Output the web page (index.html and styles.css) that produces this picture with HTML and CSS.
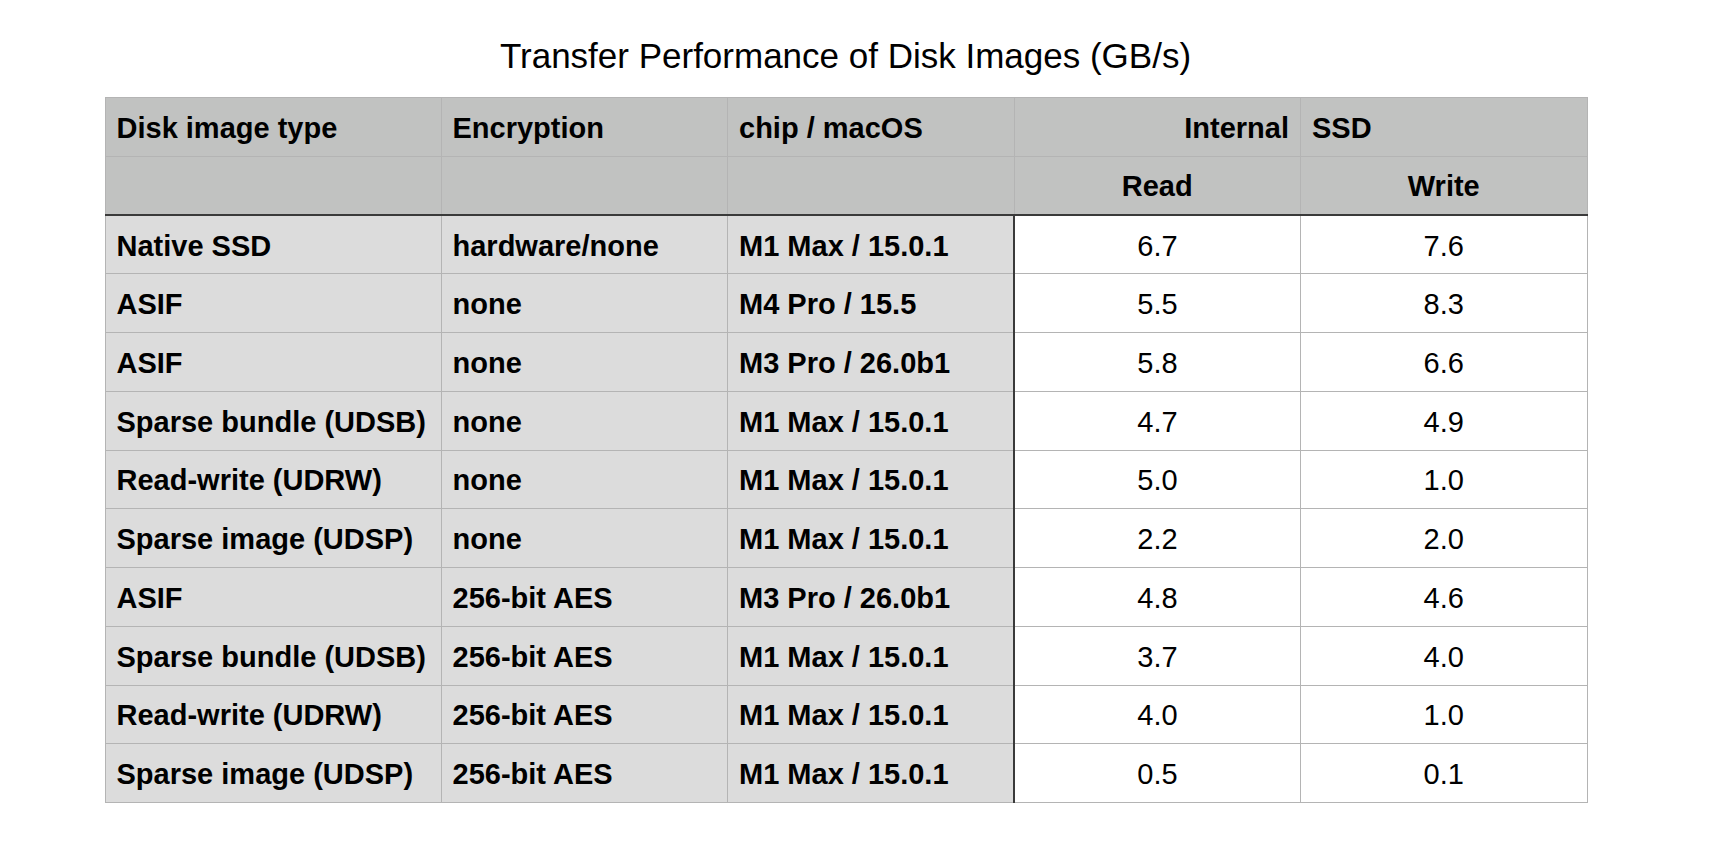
FILE: index.html
```html
<!DOCTYPE html>
<html lang="en">
<head>
<meta charset="utf-8">
<title>Transfer Performance of Disk Images (GB/s)</title>
<link rel="stylesheet" href="styles.css">
</head>
<body>
<div class="sheet">
  <h1 class="title">Transfer Performance of Disk Images (GB/s)</h1>
  <table class="perf">
    <colgroup>
      <col class="c-type"><col class="c-enc"><col class="c-chip"><col class="c-read"><col class="c-write">
    </colgroup>
    <thead>
      <tr class="h1">
        <th>Disk image type</th>
        <th>Encryption</th>
        <th>chip / macOS</th>
        <th class="right">Internal</th>
        <th>SSD</th>
      </tr>
      <tr class="h2">
        <th></th>
        <th></th>
        <th></th>
        <th class="center">Read</th>
        <th class="center">Write</th>
      </tr>
    </thead>
    <tbody>
      <tr><td class="lab">Native SSD</td><td class="lab">hardware/none</td><td class="lab last">M1 Max / 15.0.1</td><td class="num">6.7</td><td class="num">7.6</td></tr>
      <tr><td class="lab">ASIF</td><td class="lab">none</td><td class="lab last">M4 Pro / 15.5</td><td class="num">5.5</td><td class="num">8.3</td></tr>
      <tr><td class="lab">ASIF</td><td class="lab">none</td><td class="lab last">M3 Pro / 26.0b1</td><td class="num">5.8</td><td class="num">6.6</td></tr>
      <tr><td class="lab">Sparse bundle (UDSB)</td><td class="lab">none</td><td class="lab last">M1 Max / 15.0.1</td><td class="num">4.7</td><td class="num">4.9</td></tr>
      <tr><td class="lab">Read-write (UDRW)</td><td class="lab">none</td><td class="lab last">M1 Max / 15.0.1</td><td class="num">5.0</td><td class="num">1.0</td></tr>
      <tr><td class="lab">Sparse image (UDSP)</td><td class="lab">none</td><td class="lab last">M1 Max / 15.0.1</td><td class="num">2.2</td><td class="num">2.0</td></tr>
      <tr><td class="lab">ASIF</td><td class="lab">256-bit AES</td><td class="lab last">M3 Pro / 26.0b1</td><td class="num">4.8</td><td class="num">4.6</td></tr>
      <tr><td class="lab">Sparse bundle (UDSB)</td><td class="lab">256-bit AES</td><td class="lab last">M1 Max / 15.0.1</td><td class="num">3.7</td><td class="num">4.0</td></tr>
      <tr><td class="lab">Read-write (UDRW)</td><td class="lab">256-bit AES</td><td class="lab last">M1 Max / 15.0.1</td><td class="num">4.0</td><td class="num">1.0</td></tr>
      <tr><td class="lab">Sparse image (UDSP)</td><td class="lab">256-bit AES</td><td class="lab last">M1 Max / 15.0.1</td><td class="num">0.5</td><td class="num">0.1</td></tr>
    </tbody>
  </table>
</div>
</body>
</html>
```
FILE: styles.css
```css
html, body {
  margin: 0;
  padding: 0;
  background: #ffffff;
}

body {
  font-family: "Liberation Sans", Arial, Helvetica, sans-serif;
  color: #000000;
}

.sheet {
  width: 1482px;
  padding: 36px 0 0 104.5px;
}

.title {
  margin: 0 0 21px 0;
  font-size: 35px;
  font-weight: normal;
  line-height: 40px;
  text-align: center;
}

.perf {
  width: 1482px;
  table-layout: fixed;
  border-collapse: collapse;
  font-size: 29px;
}

.c-type { width: 336px; }
.c-enc { width: 286.5px; }
.c-chip { width: 286.5px; }
.c-read { width: 286.5px; }
.c-write { width: 286.5px; }

.perf th,
.perf td {
  height: 58.75px;
  padding: 2px 11px 0 11px;
  box-sizing: border-box;
  border: 1px solid #b4b4b4;
  vertical-align: middle;
  white-space: nowrap;
  line-height: 32px;
}

.perf thead th {
  background: #c1c2c1;
  font-weight: bold;
  text-align: left;
}

.perf thead th.right { text-align: right; }
.perf thead th.center { text-align: center; }

.perf thead tr.h2 th {
  border-bottom: 2px solid #3a3a3a;
}

.perf td.lab {
  background: #dcdcdc;
  font-weight: bold;
  text-align: left;
}

.perf td.last {
  border-right: 2px solid #3a3a3a;
}

.perf td.num {
  background: #ffffff;
  font-weight: normal;
  text-align: center;
}
```
